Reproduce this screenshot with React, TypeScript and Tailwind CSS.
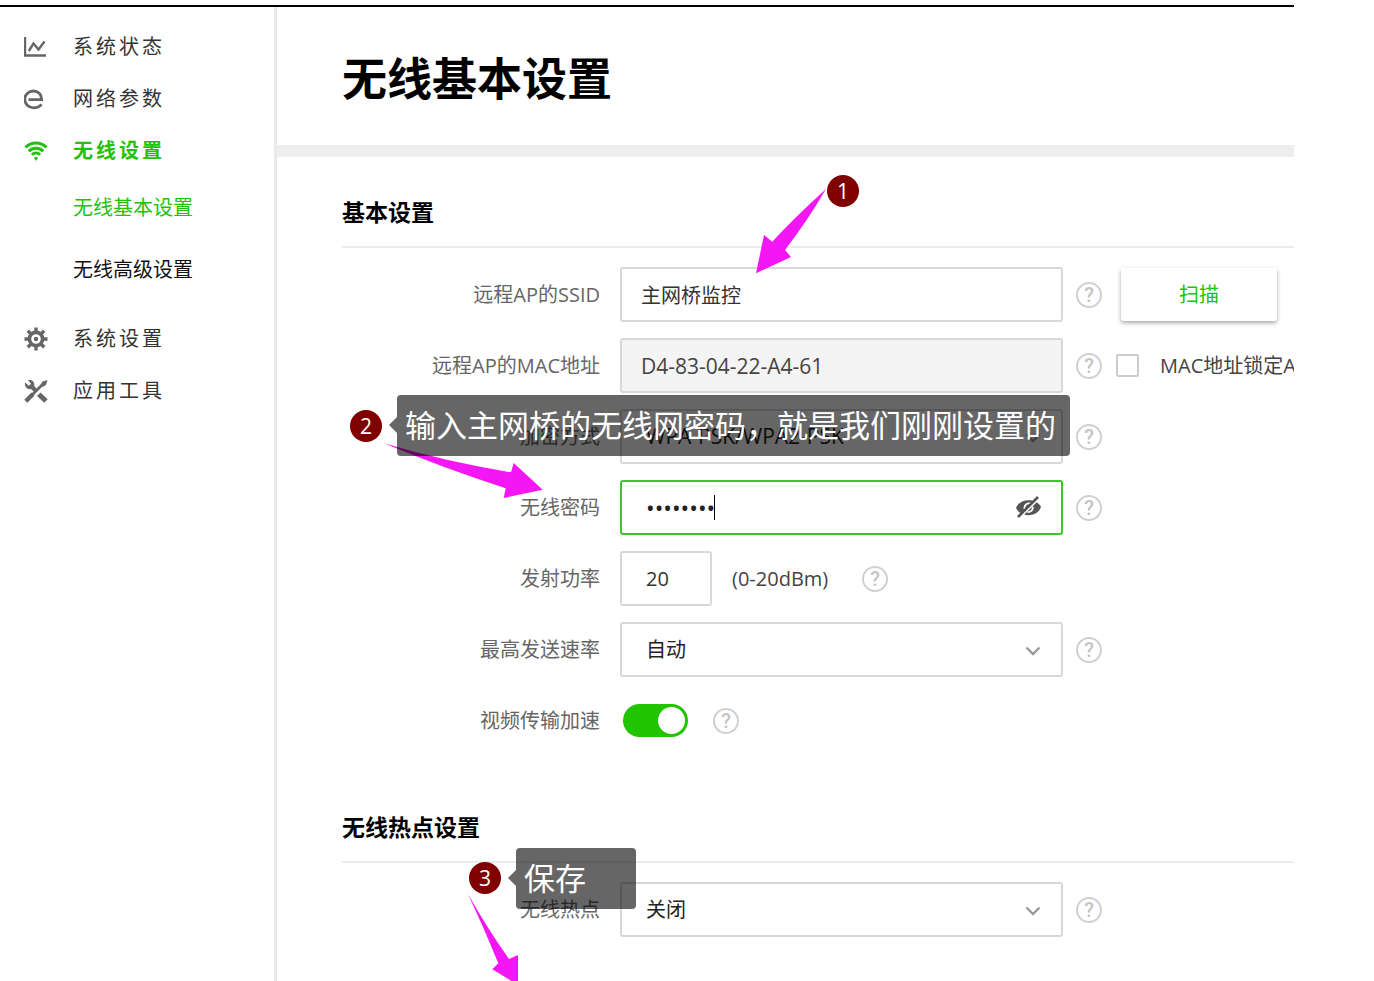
import { useState } from "react";
import type { ReactNode } from "react";

function ChartIcon() {
  return (
    <svg viewBox="0 0 24 24" className="size-6" fill="none" stroke="currentColor" strokeWidth="2.4">
      <path d="M1 2V20.500H22" />
      <path d="M4.800 16l4.700-7.500 5 6L20.500 6.500" />
    </svg>
  );
}

function NetworkIcon() {
  return (
    <svg viewBox="0 0 24 24" className="size-6" fill="none" stroke="currentColor" strokeWidth="2.8">
      <path d="M4.500 12.600H17.600C17.800 7 14 4 9.300 4 4.500 4 .800 7.600.800 12.300S4.500 20.800 9.400 20.800C13 20.800 15.600 19.700 17.600 17.400" />
    </svg>
  );
}

function WifiIcon() {
  return (
    <svg viewBox="0 0 24 24" className="size-6" fill="none" stroke="currentColor" strokeWidth="3">
      <path d="M1.500 8.500C7.300 2.600 16.700 2.600 22.500 8.500" />
      <path d="M4.700 12.200C8.800 8.200 15.200 8.200 19.300 12.200" />
      <path d="M7.900 15.700C10.300 13.300 13.700 13.300 16.100 15.700" />
      <path d="M9.800 18.800Q12 17 14.200 18.800L12 22Z" fill="currentColor" stroke="none" />
    </svg>
  );
}

function GearIcon() {
  return (
    <svg viewBox="0 0 24 24" className="size-6" fill="none" stroke="currentColor">
      <circle cx="12" cy="12" r="6.600" strokeWidth="3.600" />
      <circle cx="12" cy="12" r="2.200" fill="currentColor" stroke="none" />
      <path
        strokeWidth="3.400"
        d="M12 .500v4M12 19.500v4M.500 12h4M19.500 12h4M3.800 3.800l3 3M17.200 17.200l3 3M3.800 20.200l3-3M17.200 6.800l3-3"
      />
    </svg>
  );
}

function ToolsIcon() {
  return (
    <svg viewBox="0 0 24 24" className="size-6" fill="none" stroke="currentColor">
      <path strokeWidth="4.400" d="M1.800 22.200L9 15" />
      <path strokeWidth="2.600" d="M8.500 15.500L19.500 4.500" />
      <path fill="currentColor" stroke="none" d="M23.500 1L22 6 18.500 8 16.500 6 18.500 2.500Z" />
      <path strokeWidth="5" d="M14.800 15.200L22 22" />
      <path
        fill="currentColor"
        stroke="none"
        d="M1 3.500L4.800 6.800 7 4.800 4 1.200C8 .200 11 3 10.200 7L13.500 10.400 10.400 13.300 7 10C3.500 10.800.200 7.800 1 3.500Z"
      />
    </svg>
  );
}

function EyeOffIcon() {
  return (
    <svg viewBox="0 0 27 22" className="h-[22px] w-[27px]" fill="none">
      <path d="M1 12C4.500 2.500 21 1.500 26 11 22 21.500 6 22 1 12Z" fill="#555" />
      <path d="M9.500 13C9 9 12 6.800 15.500 7.500M17.800 10.800C18 14.300 15.500 16.300 12.500 16" stroke="#fff" strokeWidth="1.800" />
      <path d="M4.500 22L24.500 2" stroke="#fff" strokeWidth="2" />
      <path d="M3 21L23 1" stroke="#555" strokeWidth="2.600" />
    </svg>
  );
}

function Help() {
  return (
    <button
      type="button"
      aria-label="帮助"
      className="flex size-[26px] shrink-0 items-center justify-center rounded-full border-2 border-[#d0d0d0] font-[Roboto,sans-serif] text-[20px] leading-none font-medium text-[#c4c4c4]"
    >
      ?
    </button>
  );
}

const navItems = [
  { label: "系统状态", icon: <ChartIcon />, active: false },
  { label: "网络参数", icon: <NetworkIcon />, active: false },
  {
    label: "无线设置",
    icon: <WifiIcon />,
    active: true,
    children: [
      { label: "无线基本设置", active: true },
      { label: "无线高级设置", active: false },
    ],
  },
  { label: "系统设置", icon: <GearIcon />, active: false },
  { label: "应用工具", icon: <ToolsIcon />, active: false },
];

function Sidebar() {
  return (
    <aside className="w-[277px] shrink-0 border-r-[3px] border-[#e9e9e9] pt-[14px]">
      <ul>
        {navItems.map((item) => (
          <li key={item.label}>
            <a
              href="#"
              className={`flex h-[52px] items-center gap-[25px] pl-6 text-[20px] tracking-[3px] ${
                item.active ? "font-bold text-[#22c10a]" : "text-[#333]"
              }`}
            >
              <span className={item.active ? "text-[#22c10a]" : "text-[#666]"}>{item.icon}</span>
              {item.label}
            </a>
            {item.children && (
              <ul className="pb-3">
                {item.children.map((child) => (
                  <li key={child.label}>
                    <a
                      href="#"
                      className={`flex h-[62px] items-center pl-[73px] text-[20px] ${
                        child.active ? "text-[#22c10a]" : "text-[#111]"
                      }`}
                    >
                      {child.label}
                    </a>
                  </li>
                ))}
              </ul>
            )}
          </li>
        ))}
      </ul>
    </aside>
  );
}

function Row({ label, htmlFor, children }: { label: string; htmlFor: string; children: ReactNode }) {
  return (
    <div className="flex h-[55px] items-center">
      <label htmlFor={htmlFor} className="mr-5 w-[258px] shrink-0 text-right text-[20px] text-[#666]">
        {label}
      </label>
      {children}
    </div>
  );
}

function Section({ title, children }: { title: string; children: ReactNode }) {
  return (
    <section className="pt-[38px] pb-6 pl-[65px]">
      <h2 className="border-b-2 border-[#ebebeb] pb-[17px] text-[23px] leading-[34px] font-bold text-black">{title}</h2>
      <div className="mt-[19px] flex flex-col gap-4">{children}</div>
    </section>
  );
}

function Select({ id, options, latin }: { id: string; options: string[]; latin?: boolean }) {
  return (
    <div className="relative mr-[13px] shrink-0">
      <select
        id={id}
        className={`h-[55px] w-[443px] appearance-none rounded-[3px] border-2 border-[#d8d8d8] bg-white px-6 text-[#222] ${
          latin ? "text-[21px]" : "text-[20px]"
        }`}
      >
        {options.map((o) => (
          <option key={o}>{o}</option>
        ))}
      </select>
      <svg
        viewBox="0 0 16 10"
        className="pointer-events-none absolute top-6 right-[22px] h-[10px] w-4"
        fill="none"
        stroke="#999"
        strokeWidth="2.400"
      >
        <path d="M1.500 1.500L8 8l6.500-6.500" />
      </svg>
    </div>
  );
}

function Badge({ n, className }: { n: number; className: string }) {
  return (
    <span
      className={`absolute flex size-8 items-center justify-center rounded-full bg-[#800000] text-[21px] leading-none text-white ${className}`}
    >
      {n}
    </span>
  );
}

function Callout({ text, className }: { text: string; className: string }) {
  return (
    <div
      className={`absolute flex h-[61px] items-center rounded-[4px] bg-black/60 pl-2 text-[31px] whitespace-nowrap text-white ${className}`}
    >
      <span className="absolute top-[22px] right-full h-4 w-2 bg-black/60 [clip-path:polygon(100%_0,0_50%,100%_100%)]" />
      {text}
    </div>
  );
}

function Annotations() {
  return (
    <div className="pointer-events-none absolute inset-0">
      <svg viewBox="756 189 71 85" className="absolute top-[189px] left-[756px] h-[85px] w-[71px]" fill="#f516f5">
        <path d="M826 189Q794 218 772.300 241.700L764 235 756 273.300 791 257 785 250Q808 220 826 189Z" />
      </svg>
      <svg viewBox="384 443 160 56" className="absolute top-[443px] left-[384px] h-[56px] w-[160px]" fill="#f516f5">
        <path d="M384 443.300Q447 462 511 472.300L513.700 463 542.700 489.700 503.700 498 505.700 488.300Q443 468 384 443.300Z" />
      </svg>
      <svg viewBox="468 894 50 87" className="absolute top-[894px] left-[468px] h-[87px] w-[50px]" fill="#f516f5">
        <path d="M468 894Q487 928 509 959L518 955V985L492.300 969.300 498.300 963.300Q484 928 468 894Z" />
      </svg>
      <Badge n={1} className="top-[175px] left-[827px]" />
      <Badge n={2} className="top-[410px] left-[350px]" />
      <Badge n={3} className="top-[862px] left-[469px]" />
      <Callout text="输入主网桥的无线网密码，就是我们刚刚设置的" className="top-[395px] left-[397px] w-[673px]" />
      <Callout text="保存" className="top-[848px] left-[516px] w-[120px]" />
    </div>
  );
}

export default function App() {
  const [accelerate, setAccelerate] = useState(true);

  return (
    <div className="relative min-h-screen overflow-hidden bg-white pt-[5px] pr-20 font-['Open_Sans','Noto_Sans_CJK_SC',sans-serif]">
      <div className="flex min-h-[calc(100vh-5px)] border-t-2 border-black">
        <Sidebar />
        <main className="min-w-0 flex-1 overflow-hidden">
          <header className="flex h-[150px] items-center border-b-[12px] border-[#eee] pt-1 pl-[65px]">
            <h1 className="text-[45px] leading-none font-bold text-black">无线基本设置</h1>
          </header>

          <Section title="基本设置">
            <Row label="远程AP的SSID" htmlFor="ssid">
              <input
                id="ssid"
                type="text"
                defaultValue="主网桥监控"
                className="mr-[13px] h-[55px] w-[443px] shrink-0 rounded-[3px] border-2 border-[#d8d8d8] px-[19px] text-[20px] text-[#333]"
              />
              <Help />
              <button
                type="button"
                className="ml-[19px] h-[53px] w-[156px] shrink-0 rounded-[3px] bg-white text-[20px] text-[#22c10a] shadow-[0_2px_4px_rgba(0,0,0,0.35)]"
              >
                扫描
              </button>
            </Row>
            <Row label="远程AP的MAC地址" htmlFor="mac">
              <input
                id="mac"
                type="text"
                readOnly
                defaultValue="D4-83-04-22-A4-61"
                className="mr-[13px] h-[55px] w-[443px] shrink-0 rounded-[3px] border-2 border-[#d8d8d8] bg-[#f4f4f4] px-[19px] text-[21px] text-[#444]"
              />
              <Help />
              <input
                id="lock"
                type="checkbox"
                className="ml-[14px] size-[23px] shrink-0 appearance-none rounded-[2px] border-2 border-[#ccc] bg-white checked:bg-[#22c10a]"
              />
              <label htmlFor="lock" className="ml-[21px] shrink-0 text-[20px] whitespace-nowrap text-[#444]">
                MAC地址锁定AP
              </label>
            </Row>
            <Row label="加密方式" htmlFor="encryption">
              <Select id="encryption" options={["WPA-PSK/WPA2-PSK", "不加密"]} latin />
              <Help />
            </Row>
            <Row label="无线密码" htmlFor="password">
              <div className="relative mr-[13px] shrink-0">
                <input
                  id="password"
                  type="password"
                  defaultValue="12345678"
                  className="h-[55px] w-[443px] rounded-[3px] border-2 border-[#3cc52c] pr-14 pl-6 text-[23px] text-[#222]"
                />
                <span className="absolute top-[15px] left-[94px] h-[25px] w-px bg-black" />
                <button type="button" aria-label="显示密码" className="absolute top-4 right-[21px]">
                  <EyeOffIcon />
                </button>
              </div>
              <Help />
            </Row>
            <Row label="发射功率" htmlFor="power">
              <input
                id="power"
                type="text"
                defaultValue="20"
                className="mr-5 h-[55px] w-[92px] shrink-0 rounded-[3px] border-2 border-[#d8d8d8] px-6 text-[20px] text-[#333]"
              />
              <span className="mr-[34px] shrink-0 text-[20px] text-[#444]">(0-20dBm)</span>
              <Help />
            </Row>
            <Row label="最高发送速率" htmlFor="rate">
              <Select id="rate" options={["自动"]} />
              <Help />
            </Row>
            <Row label="视频传输加速" htmlFor="accelerate">
              <input
                id="accelerate"
                type="checkbox"
                role="switch"
                checked={accelerate}
                onChange={(e) => setAccelerate(e.target.checked)}
                className="mr-[25px] ml-[3px] flex h-[33px] w-[65px] shrink-0 appearance-none items-center rounded-full bg-[#ccc] px-[3px] before:size-[27px] before:rounded-full before:bg-white checked:justify-end checked:bg-[#21c400]"
              />
              <Help />
            </Row>
          </Section>

          <Section title="无线热点设置">
            <Row label="无线热点" htmlFor="hotspot">
              <Select id="hotspot" options={["关闭", "开启"]} />
              <Help />
            </Row>
          </Section>
        </main>
      </div>
      <Annotations />
    </div>
  );
}
